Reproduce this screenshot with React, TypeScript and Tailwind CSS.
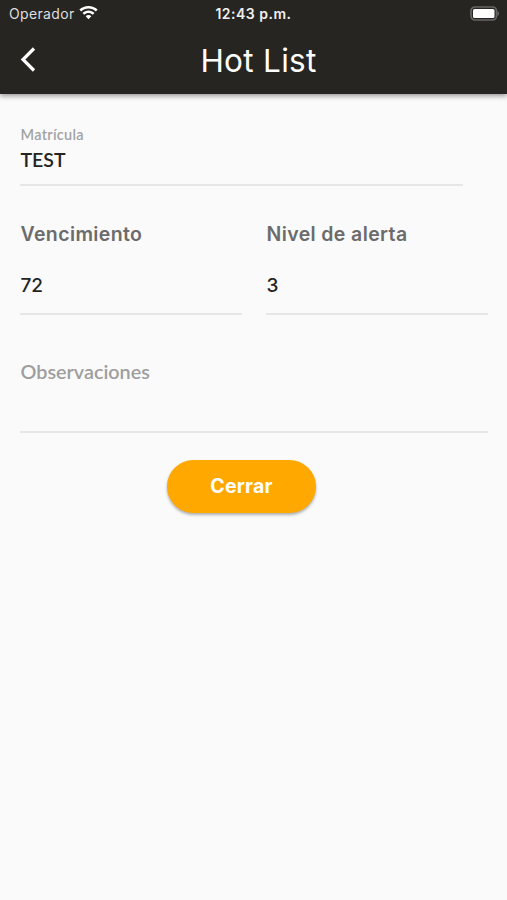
const fields = [
    { label: 'Vencimiento', value: '72' },
    { label: 'Nivel de alerta', value: '3' }
]

function StatusBar() {
    return (
        <div className="relative flex h-[27px] items-center justify-between pr-[7px] pl-[9px] text-[14px]">
            <div className="flex items-center gap-[5px] text-[#dedede]">
                <span className="tracking-[0.35px]">Operador</span>
                <svg className="-mt-px -ml-px h-[14px] w-[19px]" viewBox="0 0 19 14" fill="white">
                    <path d="M9.5 0C6 0 2.8 1.300.4 3.600l1.700 1.800c2-1.900 4.500-2.900 7.400-2.900s5.400 1 7.400 2.900l1.700-1.800C16.200 1.300 13 0 9.500 0Z" />
                    <path d="M9.500 4.500c-2.300 0-4.400.9-6 2.400l1.800 1.800c1.100-1.100 2.600-1.700 4.200-1.700s3.100.6 4.200 1.700l1.800-1.800c-1.600-1.500-3.700-2.400-6-2.400Z" />
                    <path d="M9.500 9c-1.100 0-2.100.4-2.800 1.200l2.800 3 2.800-3C11.600 9.400 10.600 9 9.500 9Z" />
                </svg>
            </div>
            <span className="absolute inset-x-0 text-center font-semibold tracking-[0.5px] text-[#f0f0f0]">12:43 p.m.</span>
            <svg className="-mt-px h-[15px] w-[30px]" viewBox="0 0 30 15">
                <rect x="1" y="1" width="25.500" height="13" rx="4" fill="none" stroke="#666" strokeWidth="1.700" />
                <rect x="3" y="3" width="21.500" height="9" rx="1.500" fill="white" />
                <path d="M27.500 5v5c2.200-.8 2.200-4.200 0-5Z" fill="#666" />
            </svg>
        </div>
    )
}

export default function App() {
    return (
        <div className="h-[900px] w-full bg-[#fafafa] font-['Lato',sans-serif] text-[#242424]">
            <header className="relative h-[94px] bg-[#262522] font-['Inter',sans-serif] text-white shadow-[0_2px_5px_rgba(0,0,0,0.4)]">
                <StatusBar />
                <div className="relative flex h-[66px] items-center px-[20px]">
                    <button aria-label="Volver" className="-mt-[2px]">
                        <svg className="h-[25px] w-[16px]" viewBox="0 0 16 25" fill="none" stroke="white" strokeWidth="3.200">
                            <path d="M14 1.500 3 12.500 14 23.500" />
                        </svg>
                    </button>
                    <h1 className="pointer-events-none absolute inset-x-0 pt-[2px] pl-[10px] text-center text-[31.500px] tracking-[0.300px]">Hot List</h1>
                </div>
            </header>

            <main className="pr-[19px] pl-[20px] pt-[31px]">
                <div className="mr-[25px] h-[61px] border-b-2 border-[#e6e6e6] pl-[0.500px]">
                    <div className="pt-px text-[14.500px] leading-[18px] font-semibold tracking-[0.300px] text-[#a3a3a3]">Matrícula</div>
                    <div className="text-[19.500px] leading-[31px] font-semibold">TEST</div>
                </div>

                <div className="mt-[34px] grid grid-cols-[222px_222px] gap-[24px]">
                    {fields.map((field) => (
                        <div key={field.label} className="h-[95px] border-b-2 border-[#e6e6e6] pl-[0.500px]">
                            <div className="font-['Inter',sans-serif] text-[19.500px] leading-[29px] font-semibold tracking-[0.380px] text-[#6b6b6b]">{field.label}</div>
                            <div className="mt-[22px] font-['Inter',sans-serif] text-[19px] leading-[29px] font-medium">{field.value}</div>
                        </div>
                    ))}
                </div>

                <div className="mt-[42px] h-[76px] border-b-2 border-[#e6e6e6] pl-[0.500px] text-[19.800px] leading-[29px] font-semibold text-[#9e9e9e]">
                    Observaciones
                </div>

                <button className="mt-[27px] ml-[147px] block h-[53px] w-[149px] rounded-full bg-[#ffa800] font-['Inter',sans-serif] text-[19.500px] font-bold tracking-[0.250px] text-white shadow-[0_2px_3px_rgba(0,0,0,0.3)]">
                    Cerrar
                </button>
            </main>
        </div>
    )
}
